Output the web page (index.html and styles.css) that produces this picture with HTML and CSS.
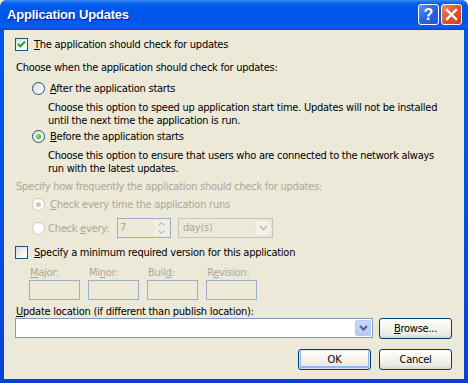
FILE: index.html
```html
<!DOCTYPE html>
<html>
<head>
<meta charset="utf-8">
<link rel="stylesheet" href="styles.css">
</head>
<body>
<div class="window">
  <div class="titlebar">
    <span class="title">Application Updates</span>
    <div class="caption-btns">
      <span class="cbtn help">?</span>
      <span class="cbtn close"><svg width="13" height="13" viewBox="0 0 13 13"><path d="M2 2 L11 11 M11 2 L2 11" stroke="#fff" stroke-width="2.4" stroke-linecap="square"/></svg></span>
    </div>
  </div>
  <div class="client">
    <div class="check first">
      <span class="box"><svg width="11" height="11" viewBox="0 0 11 11"><path d="M2 5 L4.3 7.3 L9 2.6" fill="none" stroke="#21a121" stroke-width="2"/></svg></span>
      <span><u>T</u>he application should check for updates</span>
    </div>
    <div class="text choose">Choose when the application should check for updates:</div>
    <div class="radio-row r-after"><span class="radio"></span><span><u>A</u>fter the application starts</span></div>
    <div class="desc d-after">Choose this option to speed up application start time. Updates will not be installed<br>until the next time the application is run.</div>
    <div class="radio-row r-before"><span class="radio on"></span><span><u>B</u>efore the application starts</span></div>
    <div class="desc d-before">Choose this option to ensure that users who are connected to the network always<br>run with the latest updates.</div>
    <div class="text disabled freq">Specify how frequently the application should check for updates:</div>
    <div class="radio-row disabled r-every"><span class="radio dis on"></span><span><u>C</u>heck every time the application runs</span></div>
    <div class="every-row disabled">
      <span class="radio dis"></span>
      <span class="every-label">Check <u>e</u>very:</span>
      <div class="spin">
        <span class="spin-val">7</span>
        <div class="spin-btns">
          <span class="spin-btn"><svg width="7" height="4" viewBox="0 0 7 4"><path d="M0.5 3.5 L3.5 0.8 L6.5 3.5" fill="none" stroke="#c4c2b8" stroke-width="1.3"/></svg></span>
          <span class="spin-btn"><svg width="7" height="4" viewBox="0 0 7 4"><path d="M0.5 0.5 L3.5 3.2 L6.5 0.5" fill="none" stroke="#c4c2b8" stroke-width="1.3"/></svg></span>
        </div>
      </div>
      <div class="select">
        <span class="select-val">day(s)</span>
        <span class="drop dis"><svg width="9" height="6" viewBox="0 0 9 6"><path d="M1 1 L4.5 4.5 L8 1" fill="none" stroke="#c9c7bc" stroke-width="2"/></svg></span>
      </div>
    </div>
    <div class="check min">
      <span class="box"></span>
      <span><u>S</u>pecify a minimum required version for this application</span>
    </div>
    <div class="version disabled">
      <div class="vcol"><span class="vlabel"><u>M</u>ajor:</span><span class="vbox"></span></div>
      <div class="vcol"><span class="vlabel">Mi<u>n</u>or:</span><span class="vbox"></span></div>
      <div class="vcol"><span class="vlabel">Buil<u>d</u>:</span><span class="vbox"></span></div>
      <div class="vcol"><span class="vlabel">R<u>e</u>vision:</span><span class="vbox"></span></div>
    </div>
    <div class="text loc-label"><u>U</u>pdate location (if different than publish location):</div>
    <div class="loc-row">
      <div class="combo">
        <span class="drop"><svg width="9" height="6" viewBox="0 0 9 6"><path d="M1 1 L4.5 4.5 L8 1" fill="none" stroke="#4d6185" stroke-width="2"/></svg></span>
      </div>
      <button class="btn"><u>B</u>rowse...</button>
    </div>
    <div class="actions">
      <button class="btn default">OK</button>
      <button class="btn">Cancel</button>
    </div>
  </div>
</div>
</body>
</html>
```

FILE: styles.css
```css
html, body {
  margin: 0;
  padding: 0;
  background: #ece9d8;
}

.window {
  width: 468px;
  height: 383px;
  box-sizing: border-box;
  display: flex;
  flex-direction: column;
  background: linear-gradient(to bottom, #0058ee 0, #0052e3 200px, #0840d6 383px);
  border-radius: 7px 7px 0 0;
  overflow: hidden;
  font-family: "DejaVu Sans Condensed", "Liberation Sans", sans-serif;
  font-size: 11px;
  color: #000;
}

.titlebar {
  height: 30px;
  flex: none;
  display: flex;
  align-items: center;
  justify-content: space-between;
  padding: 0 7px 1px 7px;
  box-sizing: border-box;
  background: linear-gradient(to bottom, #3b8cf7 0, #0a62f0 3px, #0058ee 7px, #0055e8 18px, #0258ef 24px, #0a5cf0 27px, #0048d8 30px);
}

.title {
  font-family: "Liberation Sans", sans-serif;
  font-weight: bold;
  font-size: 13px;
  color: #fff;
  text-shadow: 1px 1px 0 #0a1883;
  letter-spacing: -0.2px;
}

.caption-btns {
  display: flex;
  gap: 2px;
  margin-right: -1px;
}

.cbtn {
  width: 21px;
  height: 21px;
  box-sizing: border-box;
  border: 1px solid #fff;
  border-radius: 3px;
  display: flex;
  align-items: center;
  justify-content: center;
}

.help {
  background: linear-gradient(135deg, #5d93f5 0, #2a64e4 50%, #1f52d4 100%);
  color: #fff;
  font-family: "Liberation Sans", sans-serif;
  font-weight: bold;
  font-size: 16px;
  line-height: 1;
}

.close {
  background: linear-gradient(135deg, #f08a6a 0, #e0522a 50%, #cc4220 100%);
}

.client {
  flex: 1;
  margin: 0 4px 4px 4px;
  background: #ece9d8;
  display: flex;
  flex-direction: column;
  padding: 8px 12px 0 11px;
  letter-spacing: -0.25px;
}

.text, .desc, .check, .radio-row {
  line-height: 13px;
  white-space: nowrap;
}

.disabled, .disabled .select-val, .disabled .spin-val {
  color: #aca899;
}

.check {
  display: flex;
  align-items: center;
  gap: 6px;
  height: 13px;
}

.box {
  width: 13px;
  height: 13px;
  box-sizing: border-box;
  border: 1px solid #1c5180;
  background: linear-gradient(135deg, #dcdcd7 0, #fbfbf9 80%, #fff 100%);
  display: flex;
  align-items: center;
  justify-content: center;
  flex: none;
}

.choose { margin-top: 10px; padding-left: 1px; }

.radio-row {
  display: flex;
  align-items: center;
  gap: 5px;
  height: 13px;
  padding-left: 17px;
}

.radio {
  width: 13px;
  height: 13px;
  box-sizing: border-box;
  border-radius: 50%;
  border: 1px solid #1c5180;
  background: linear-gradient(135deg, #dcdcd7 0, #f6f6f3 70%, #fff 100%);
  flex: none;
  position: relative;
}

.radio.on::after {
  content: "";
  position: absolute;
  left: 3px;
  top: 3px;
  width: 5px;
  height: 5px;
  border-radius: 50%;
  background: radial-gradient(circle at 40% 40%, #9eeb9e 0, #4dc64d 45%, #21a121 100%);
}

.radio.dis {
  border-color: #cac8bb;
  background: #fff;
}

.radio.dis.on::after {
  background: #cac8bb;
}

.r-after { margin-top: 8px; }
.desc { padding-left: 33px; }
.d-after { margin-top: 6px; }
.r-before { margin-top: 3px; }
.d-before { margin-top: 6px; }
.freq { margin-top: 5px; padding-left: 1px; }
.r-every { margin-top: 5px; }

.every-row {
  margin-top: 7px;
  height: 20px;
  display: flex;
  align-items: center;
  padding-left: 17px;
}

.every-label {
  margin-left: 3px;
  width: 69px;
  white-space: nowrap;
}

.spin {
  width: 54px;
  height: 20px;
  box-sizing: border-box;
  border: 1px solid #9bb0c4;
  display: flex;
  align-items: stretch;
  justify-content: space-between;
  background: #ece9d8;
}

.spin-val {
  padding-left: 2px;
  line-height: 18px;
}

.spin-btns {
  width: 15px;
  display: flex;
  flex-direction: column;
  gap: 0;
  padding: 1px;
}

.spin-btn {
  flex: 1;
  display: flex;
  align-items: center;
  justify-content: center;
  background: #f1efe6;
  border-radius: 2px;
}

.select {
  margin-left: 7px;
  width: 95px;
  height: 20px;
  box-sizing: border-box;
  border: 1px solid #c9c7ba;
  display: flex;
  align-items: stretch;
  justify-content: space-between;
}

.select-val {
  padding-left: 4px;
  line-height: 18px;
}

.drop {
  width: 16px;
  margin: 1px;
  display: flex;
  align-items: center;
  justify-content: center;
  border-radius: 2px;
  background: linear-gradient(to bottom, #c9d8fc 0, #b4c9f8 100%);
  border: 1px solid #b6cbf7;
  box-sizing: border-box;
}

.drop.dis {
  background: #f3f1e8;
  border-color: #e6e4d8;
}

.min { margin-top: 8px; }

.version {
  margin-top: 7px;
  display: flex;
  gap: 8px;
  padding-left: 14px;
}

.vcol {
  display: flex;
  flex-direction: column;
  width: 51px;
}

.vlabel {
  line-height: 13px;
  padding-left: 1px;
  white-space: nowrap;
}

.vbox {
  margin-top: 1px;
  height: 20px;
  box-sizing: border-box;
  border: 1px solid #9bb0c4;
}

.loc-label { margin-top: 5px; padding-left: 1px; }

.loc-row {
  display: flex;
  gap: 6px;
  align-items: flex-start;
}

.combo {
  width: 358px;
  height: 20px;
  box-sizing: border-box;
  border: 1px solid #7f9db9;
  background: #fff;
  display: flex;
  justify-content: flex-end;
}

.btn {
  width: 73px;
  height: 21px;
  box-sizing: border-box;
  border: 1px solid #003c74;
  border-radius: 3px;
  background: linear-gradient(to bottom, #ffffff 0, #f6f5f0 40%, #ecebe5 80%, #d8d4c9 100%);
  font-family: inherit;
  font-size: 11px;
  letter-spacing: inherit;
  color: #000;
  padding: 0;
  margin: 0;
}

.btn.default {
  box-shadow: inset 0 0 0 1px #cee7ff, inset 0 -1px 0 2px #98b8ea;
}

.actions {
  margin-top: 10px;
  display: flex;
  justify-content: flex-end;
  gap: 8px;
}
```
